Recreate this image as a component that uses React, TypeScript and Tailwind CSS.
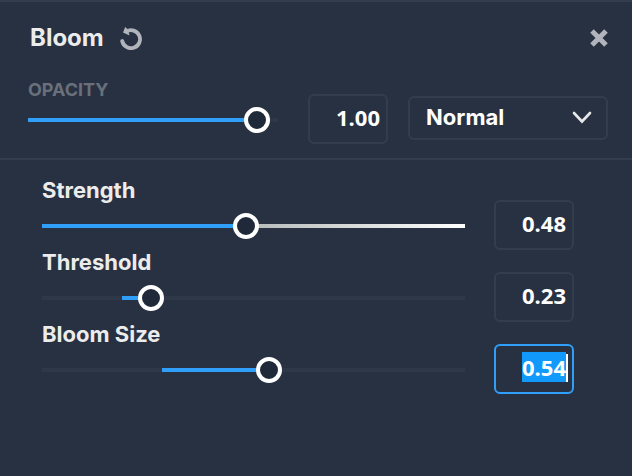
import React, { useEffect, useRef, useState } from 'react';
import { clsx, type ClassValue } from 'clsx';
import { twMerge } from 'tailwind-merge';

function cn(...inputs: ClassValue[]) {
    return twMerge(clsx(inputs));
}

const TRACK = '#2f3848';
const FILL = '#2f9ffa';

interface SliderProps {
    id: string;
    value: number;
    max?: number;
    // where the coloured part of the track begins, in percent
    origin?: number;
    lit?: boolean;
    onChange: (val: number) => void;
}

function Slider({ id, value, max = 1, origin = 0, lit, onChange }: SliderProps) {
    const end = (value / max) * 100;
    const rest = lit ? `#b4b8b8 ${end}%, #ffffff` : `${TRACK} ${end}%`;
    const background = `linear-gradient(to right, ${TRACK} ${origin}%, ${FILL} ${origin}%, ${FILL} ${end}%, ${rest})`;

    return (
        <div className="relative h-7 flex items-center">
            <div className="absolute inset-x-0 top-3 h-1" style={{ background }} />
            <input
                id={id}
                type="range"
                min={0}
                max={max}
                step="any"
                value={value}
                onChange={(e) => onChange(Number(e.target.value))}
                className="relative block w-full h-7 appearance-none bg-transparent outline-none cursor-pointer [&::-webkit-slider-thumb]:appearance-none [&::-webkit-slider-thumb]:size-[26px] [&::-webkit-slider-thumb]:rounded-full [&::-webkit-slider-thumb]:border-4 [&::-webkit-slider-thumb]:border-white [&::-webkit-slider-thumb]:bg-[#202939]"
            />
        </div>
    );
}

interface NumberBoxProps {
    label: string;
    value: number;
    selected?: boolean;
    onChange: (val: number) => void;
}

function NumberBox({ label, value, selected, onChange }: NumberBoxProps) {
    const ref = useRef<HTMLInputElement>(null);

    useEffect(() => {
        if (selected) {
            ref.current?.focus();
            ref.current?.select();
        }
    }, [selected]);

    return (
        <div className="relative shrink-0">
            <input
                ref={ref}
                type="text"
                inputMode="decimal"
                aria-label={label}
                value={value.toFixed(2)}
                onChange={(e) => onChange(Number(e.target.value) || 0)}
                className="peer block w-20 h-[50px] pr-1.5 pb-1 rounded-md border-2 border-[#323d4d] bg-transparent text-right font-['Open_Sans',sans-serif] text-[22px] leading-7 font-bold text-white outline-none focus:border-[#2f9ffa] selection:bg-[#1199fb] selection:text-white"
            />
            <span className="absolute right-1.5 top-2.5 hidden h-7 w-0.5 bg-white peer-focus:block" />
        </div>
    );
}

interface ParamRowProps extends Omit<SliderProps, 'onChange' | 'value'> {
    label: string;
    initial: number;
    selected?: boolean;
}

function ParamRow({ label, initial, selected, ...slider }: ParamRowProps) {
    const [value, setValue] = useState(initial);

    return (
        <div className="flex items-end gap-[29px]">
            <div className="flex-1 min-w-0 pb-2.5">
                <label htmlFor={slider.id} className="block mb-2.5 text-[22px] leading-6 font-bold">{label}</label>
                <Slider {...slider} value={value} onChange={setValue} />
            </div>
            <NumberBox label={`${label} value`} value={value} selected={selected} onChange={setValue} />
        </div>
    );
}

export default function App() {
    const [opacity, setOpacity] = useState(1);

    return (
        <main className="min-h-screen border-t-2 border-[#323d4d] bg-[#283142] text-[#ececec] font-['Inter',sans-serif]">
            <header className="flex items-center h-[72px] pl-[30px] pr-6">
                <h1 className="text-2xl font-bold">Bloom</h1>
                <button type="button" aria-label="Reset" className="ml-4 text-[#b1b5bb]">
                    <ResetIcon />
                </button>
                <button type="button" aria-label="Close" className="ml-auto text-[#b1b5bb]">
                    <CloseIcon />
                </button>
            </header>

            <section className="flex items-end pt-1 pb-3.5 pl-7 pr-6 border-b-2 border-[#323d4d]">
                <div className="flex-1 min-w-0 pb-2.5 mr-[30px]">
                    <label htmlFor="opacity" className="block mb-1 text-lg leading-6 font-bold uppercase text-[#69707b]">Opacity</label>
                    <Slider id="opacity" value={opacity} max={1.035} onChange={setOpacity} />
                </div>
                <NumberBox label="Opacity value" value={opacity} onChange={setOpacity} />
                <div className="relative ml-5 mb-1 w-[200px]">
                    <select
                        aria-label="Blend mode"
                        defaultValue="Normal"
                        className={cn('block w-full h-11 pl-4 pr-10 pb-0.5 rounded-md border-2 border-[#323d4d] bg-[#283142]', 'appearance-none text-[22px] font-bold text-white outline-none')}
                    >
                        <option>Normal</option>
                        <option>Multiply</option>
                        <option>Screen</option>
                        <option>Overlay</option>
                    </select>
                    <ChevronIcon />
                </div>
            </section>

            <section className="pt-[18px] pb-20 pl-[42px] pr-[58px]">
                <ParamRow id="strength" label="Strength" initial={0.48} lit />
                <ParamRow id="threshold" label="Threshold" initial={0.23} max={0.95} origin={19} />
                <ParamRow id="bloom-size" label="Bloom Size" initial={0.54} origin={28.4} selected />
            </section>
        </main>
    );
}

function ResetIcon() {
    return (
        <svg width="22" height="24" viewBox="0 0 22 24" fill="none">
            <path d="M2.2 15A9 9 0 1 0 6.5 5.4" stroke="currentColor" strokeWidth="3.8" strokeLinecap="round" />
            <path d="M5.2 1L3 6.5L9.5 9.5L8 3.5Z" fill="currentColor" />
        </svg>
    );
}

function CloseIcon() {
    return (
        <svg width="18" height="18" viewBox="0 0 18 18" fill="none" stroke="currentColor" strokeWidth="5">
            <path d="M2 2L16 16M16 2L2 16" />
        </svg>
    );
}

function ChevronIcon() {
    return (
        <svg width="20" height="14" viewBox="0 0 20 14" fill="none" className="absolute right-4 top-[15px] pointer-events-none">
            <path d="M2 2L10 10.5L18 2" stroke="#e6e8ea" strokeWidth="2.6" strokeLinecap="round" />
        </svg>
    );
}
